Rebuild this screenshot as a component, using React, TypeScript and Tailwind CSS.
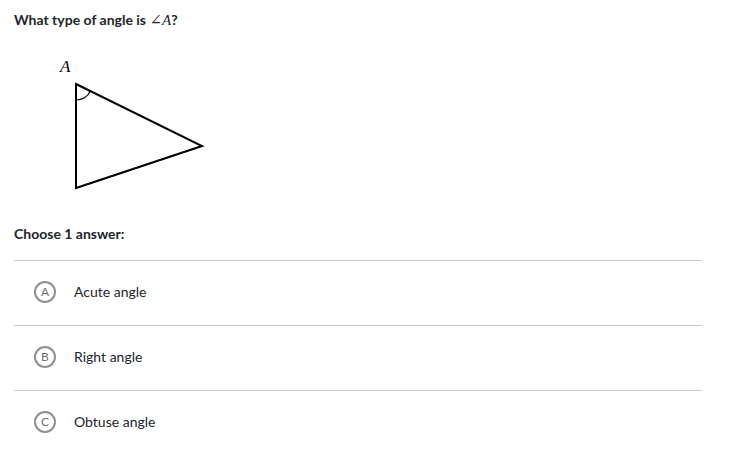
import React from 'react';

const choices = [
  { letter: 'A', label: 'Acute angle' },
  { letter: 'B', label: 'Right angle' },
  { letter: 'C', label: 'Obtuse angle' },
];

export default function App() {
  return (
    <div className="min-h-screen bg-white px-[14px] pt-[10px] text-[#21242c]" style={{ fontFamily: 'Lato, "Noto Sans", sans-serif' }}>
      <div className="text-[14px] font-bold leading-[20px]">
        What type of angle is{' '}
        <span className="font-normal text-[15px]" style={{ fontFamily: '"Liberation Serif", "DejaVu Serif", serif' }}>
          ∠<span className="italic">A</span>
        </span>
        ?
      </div>

      {/* Triangle figure */}
      <svg width="200" height="194" viewBox="0 0 200 194" className="block">
        <text x="46" y="42" fontSize="17" fontStyle="italic" fontFamily="'Liberation Serif', serif" fill="#000">A</text>
        <polygon points="62,54 188,116 62,158" fill="none" stroke="#000" strokeWidth="2" strokeLinejoin="miter" />
        <path d="M 62 70 A 16 16 0 0 0 76.4 61" fill="none" stroke="#000" strokeWidth="1.2" />
      </svg>

      <div className="text-[14px] font-bold leading-[20px] mb-[16px]">Choose 1 answer:</div>

      <div className="w-[688px]">
        {choices.map((c) => (
          <div key={c.letter} className="flex h-[65px] items-center border-t border-[#c8c8ca] pb-[2px]">
            <div className="ml-[20px] flex h-[22px] w-[22px] items-center justify-center rounded-full border-2 border-[#8e8f92] text-[12px] text-[#6f7074]">
              {c.letter}
            </div>
            <div className="ml-[18px] text-[14px] leading-[20px]">{c.label}</div>
          </div>
        ))}
        <div className="border-t border-[#c8c8ca]" />
      </div>
    </div>
  );
}
